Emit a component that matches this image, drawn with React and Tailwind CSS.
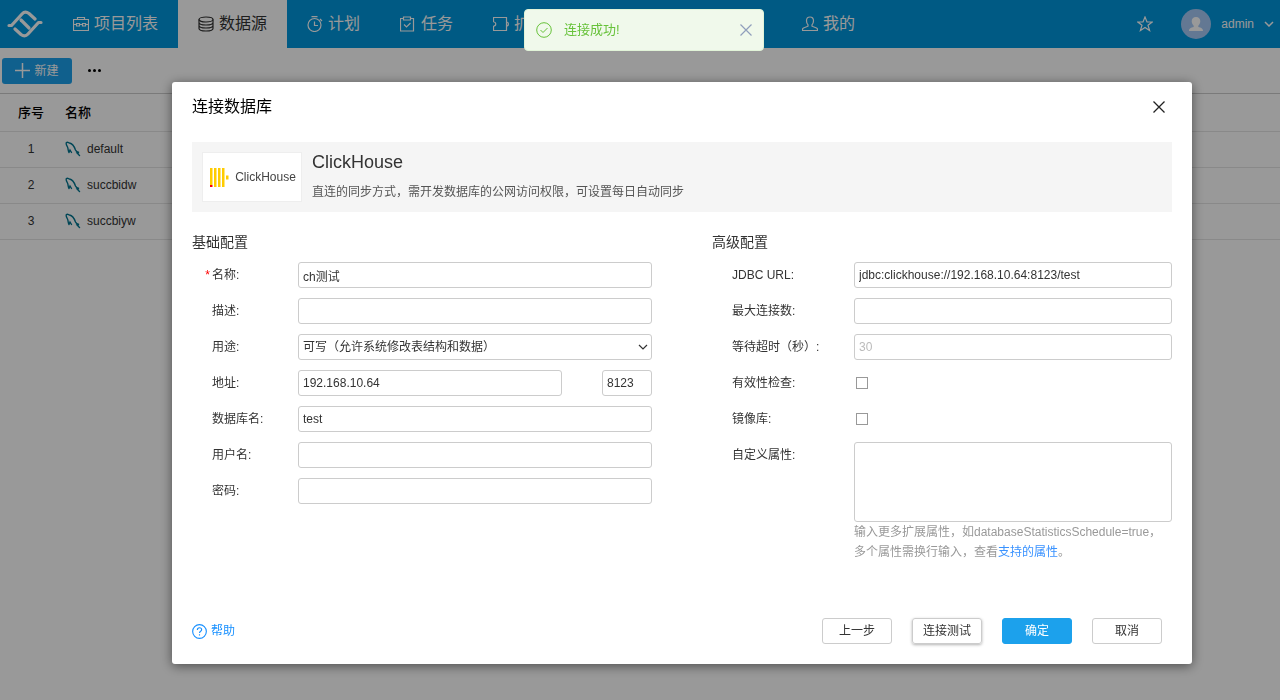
import { useState } from 'react'

const font = "font-['Liberation_Sans','Noto_Sans_CJK_SC',sans-serif]"

function Logo() {
  return (
    <svg viewBox="0 0 36 28" className="h-7 w-9" fill="none" stroke="#fff" strokeWidth="3.2" strokeLinejoin="round" strokeLinecap="round">
      <path d="M2 15.500h2.500L15 4c2-2.200 4.500-2.400 7-.5l6 5.500" />
      <path d="M34 12.500h-2.500L21 24c-2 2.200-4.500 2.400-7 .5L8 19" />
      <path d="M14 10l8 8" />
    </svg>
  )
}

function NavIcon({ children }) {
  return (
    <svg viewBox="0 0 16 16" className="h-4 w-4 shrink-0" fill="none" stroke="currentColor" strokeWidth="1.2">
      {children}
    </svg>
  )
}

const icons = {
  project: (
    <NavIcon>
      <path d="M.5 3.500h15v11H.5zM4.500 3.500v-2h7v2M.5 8.500h3M6.500 8.500h3M12.500 8.500h3" />
      <path d="M3.500 7.500h3v2.500h-3zM9.500 7.500h3v2.500h-3z" />
    </NavIcon>
  ),
  database: (
    <NavIcon>
      <ellipse cx="8" cy="3.500" rx="7" ry="2.500" />
      <path d="M1 3.500v9C1 13.900 4.100 15 8 15s7-1.100 7-2.500v-9M1 6.500C1 7.900 4.100 9 8 9s7-1.100 7-2.500M1 9.500C1 10.900 4.100 12 8 12s7-1.100 7-2.500" />
    </NavIcon>
  ),
  plan: (
    <NavIcon>
      <circle cx="7.500" cy="9" r="6.500" />
      <path d="M4.500 .6h6M7.500 5.500v4H11M13 3l2 2" />
    </NavIcon>
  ),
  task: (
    <NavIcon>
      <path d="M3.500 2.500h-3v12.500h13V2.500h-3M3.500 1h7v3h-7zM4 8.500l2.500 2.500L10.500 7" />
    </NavIcon>
  ),
  extension: (
    <NavIcon>
      <path d="M.5 6V1.500h13V6M13.500 10v4.500H.5V10M.5 6c3 0 3 4 0 4M13.500 6v4c2.500 0 2.500-4 0-4z" />
    </NavIcon>
  ),
  mine: (
    <NavIcon>
      <path d="M8 1C5.800 1 4.500 2.600 4.500 4.800c0 1.700.7 3.200 1.500 4v1.400L1.500 12c-.6.300-1 .8-1 1.500v1h15v-1c0-.7-.4-1.200-1-1.500L10 10.200V8.800c.8-.8 1.500-2.300 1.500-4C11.500 2.600 10.200 1 8 1z" />
    </NavIcon>
  ),
}

const navItems = [
  { key: 'project', label: '项目列表' },
  { key: 'database', label: '数据源', active: true },
  { key: 'plan', label: '计划' },
  { key: 'task', label: '任务' },
  { key: 'extension', label: '扩展', wide: true },
  { key: 'mine', label: '我的' },
]

const sources = ['default', 'succbidw', 'succbiyw']

function Header() {
  return (
    <header className="flex h-12 items-center bg-[#0096dc] text-white">
      <div className="w-[53px] shrink-0 pl-[7px]"><Logo /></div>
      <nav className="flex h-full">
        {navItems.map(({ key, label, active, wide }) => (
          <a
            key={key}
            href="#"
            className={`flex h-full shrink-0 items-center gap-[5px] px-5 text-base whitespace-nowrap ${active ? 'bg-white text-[#333]' : ''} ${wide ? 'w-[309px]' : ''}`}
          >
            {icons[key]}
            <span>{label}</span>
          </a>
        ))}
      </nav>
      <div className="ml-auto flex items-center pr-1.5">
        <button type="button" aria-label="收藏" className="mr-7">
          <svg viewBox="0 0 16 16" className="h-4 w-4" fill="none" stroke="currentColor" strokeWidth="1.2">
            <path d="M8 1l2 5h5.200l-4.200 3.300 1.600 5.200L8 11.400l-4.600 3.100L5 9.300.8 6H6z" />
          </svg>
        </button>
        <button type="button" className="flex items-center text-xs">
          <svg viewBox="0 0 30 30" className="mr-2.5 h-[30px] w-[30px]">
            <circle cx="15" cy="15" r="15" fill="#a5c9f5" />
            <path d="M15 8c-2.800 0-4.300 1.900-4.300 4.300 0 1.800.9 3.500 2 4.400v1.200c-2.600.8-4.700 1-4.700 4.100h14c0-3.100-2.100-3.300-4.700-4.100v-1.200c1.100-.9 2-2.600 2-4.400C19.300 9.900 17.800 8 15 8z" fill="#fff" />
          </svg>
          admin
          <svg viewBox="0 0 10 6" className="ml-2.5 h-1.5 w-2.5" fill="none" stroke="currentColor" strokeWidth="1.5">
            <path d="M1 1l4 4 4-4" />
          </svg>
        </button>
      </div>
    </header>
  )
}

function MysqlIcon() {
  return (
    <svg viewBox="0 0 16 16" className="h-4 w-4" fill="none" stroke="#00758f" strokeWidth="1.4" strokeLinecap="round">
      <path d="M4 11.500C2.800 10 3.500 8 2.500 6 1.500 4 .5 2.500 1.500 1.500c1-.8 2 .3 3 .5 3 .5 5 4 6 7 .5 1.300 1 2 3.500 2.500l-2 .5 2.500 2.500M4 11.500l1-2.500 1.500 2.500" />
    </svg>
  )
}

function SourceList() {
  return (
    <main>
      <div className="flex h-[46px] items-center border-b border-[#ccc] pl-0.5 text-xs">
        <button type="button" className="flex h-[26px] w-[70px] items-center justify-center gap-1 rounded-[3px] bg-[#1ca1ec] text-white">
          <svg viewBox="0 0 15 15" className="h-[15px] w-[15px]" stroke="currentColor" strokeWidth="1.500">
            <path d="M7.500 0v15M0 7.500h15" />
          </svg>
          新建
        </button>
        <button type="button" aria-label="更多" className="ml-4 flex gap-0.5">
          {[0, 1, 2].map(i => <span key={i} className="h-[3px] w-[3px] rounded-full bg-black" />)}
        </button>
      </div>
      <table className="w-full text-xs text-[#333]">
        <thead>
          <tr className="h-[37px] border-b border-[#e5e5e5] text-[13px] text-black">
            <th className="w-[62px] font-medium">序号</th>
            <th className="pl-[3px] text-left font-medium">名称</th>
          </tr>
        </thead>
        <tbody>
          {sources.map((name, i) => (
            <tr key={name} className="h-9 border-b border-[#e5e5e5]">
              <td className="text-center">{i + 1}</td>
              <td className="pl-[3px]">
                <div className="flex items-center gap-1.5"><MysqlIcon />{name}</div>
              </td>
            </tr>
          ))}
        </tbody>
      </table>
    </main>
  )
}

const control = 'h-[26px] min-w-0 rounded-[3px] border border-[#ccc] bg-white px-1 text-xs text-[#333] placeholder:text-[#bbb] outline-none'

function Field({ id, label, required, labelWidth, children }) {
  return (
    <div className="flex min-h-[26px] items-start">
      <label htmlFor={id} className={`shrink-0 leading-[26px] ${labelWidth}`}>
        <span className="inline-block w-5 pr-0.5 text-right text-[#f00]">{required ? '*' : ''}</span>
        {label}:
      </label>
      {children}
    </div>
  )
}

function BasicConfig() {
  const w = 'w-[106px]'
  return (
    <section className="w-[46.94%]">
      <h3 className="mb-2.5 text-sm leading-5">基础配置</h3>
      <div className="flex flex-col gap-2.5">
        <Field id="name" label="名称" required labelWidth={w}><input id="name" className={`${control} flex-1`} defaultValue="ch测试" /></Field>
        <Field id="desc" label="描述" labelWidth={w}><input id="desc" className={`${control} flex-1`} /></Field>
        <Field id="usage" label="用途" labelWidth={w}>
          <div className="relative flex flex-1">
            <select id="usage" className={`${control} flex-1 appearance-none`}>
              <option>可写（允许系统修改表结构和数据）</option>
            </select>
            <svg viewBox="0 0 10 6" className="pointer-events-none absolute top-2.5 right-1 h-1.5 w-2.5" fill="none" stroke="#333" strokeWidth="1.2">
              <path d="M1 1l4 4 4-4" />
            </svg>
          </div>
        </Field>
        <Field id="host" label="地址" labelWidth={w}>
          <input id="host" className={`${control} flex-1`} defaultValue="192.168.10.64" />
          <input aria-label="端口" className={`${control} ml-10 w-[50px]`} defaultValue="8123" />
        </Field>
        <Field id="db" label="数据库名" labelWidth={w}><input id="db" className={`${control} flex-1`} defaultValue="test" /></Field>
        <Field id="user" label="用户名" labelWidth={w}><input id="user" className={`${control} flex-1`} /></Field>
        <Field id="password" label="密码" labelWidth={w}><input id="password" type="password" className={`${control} flex-1`} /></Field>
      </div>
    </section>
  )
}

function AdvancedConfig() {
  const w = 'w-[142px]'
  const checkbox = 'mt-[7px] ml-0.5 h-3 w-3 appearance-none border border-[#999] bg-white'
  return (
    <section className="w-[46.94%]">
      <h3 className="mb-2.5 text-sm leading-5">高级配置</h3>
      <div className="flex flex-col gap-2.5">
        <Field id="url" label="JDBC URL" labelWidth={w}>
          <input id="url" className={`${control} flex-1`} defaultValue="jdbc:clickhouse://192.168.10.64:8123/test" />
        </Field>
        <Field id="max" label="最大连接数" labelWidth={w}><input id="max" className={`${control} flex-1`} /></Field>
        <Field id="timeout" label="等待超时（秒）" labelWidth={w}><input id="timeout" className={`${control} flex-1`} placeholder="30" /></Field>
        <Field id="valid" label="有效性检查" labelWidth={w}><input id="valid" type="checkbox" className={checkbox} /></Field>
        <Field id="mirror" label="镜像库" labelWidth={w}><input id="mirror" type="checkbox" className={checkbox} /></Field>
        <Field id="props" label="自定义属性" labelWidth={w}>
          <div className="flex min-w-0 flex-1 flex-col">
            <textarea id="props" className="h-20 resize-none rounded-[3px] border border-[#ccc] p-1 outline-none" />
            <div className="leading-5 text-[#999]">
              <p>输入更多扩展属性，如databaseStatisticsSchedule=true，</p>
              <p className="flex flex-wrap">
                <span>多个属性需换行输入，查看</span>
                <a href="#" className="text-[#3992ff]">支持的属性</a>
                <span>。</span>
              </p>
            </div>
          </div>
        </Field>
      </div>
    </section>
  )
}

function ClickHouseLogo() {
  return (
    <div className="flex h-[50px] w-[100px] shrink-0 items-center justify-center gap-1.5 border border-[#eee] bg-white pl-0.5 text-xs text-[#444]">
      <svg viewBox="0 0 19 19" className="h-[19px] w-[19px] shrink-0" fill="#fc0">
        <path d="M0 0h2.500v17H0zM4 0h2.500v19H4zM8 0h2.500v19H8zM12 0h2.500v19H12zM16 7.500h2.500v4H16z" />
        <path d="M0 17h2.500v2H0z" fill="#f00" />
      </svg>
      ClickHouse
    </div>
  )
}

function ConnectDialog({ onClose }) {
  const button = 'h-[26px] w-[70px] rounded-[3px] border text-xs'
  return (
    <div className="fixed inset-0 bg-black/40 pt-[82px] pr-[88px] pl-[172px]">
      <div role="dialog" aria-label="连接数据库" className="rounded-[3px] bg-white px-5 pb-5 text-xs text-[#333] shadow-[0_2px_12px_rgba(0,0,0,0.5)]">
        <div className="flex h-[60px] items-start justify-between pt-[13px] pr-1.5">
          <h2 className="text-base leading-6 text-black">连接数据库</h2>
          <button type="button" aria-label="关闭" onClick={onClose} className="pt-[5px]">
            <svg viewBox="0 0 14 14" className="h-3.5 w-3.5" stroke="#222" strokeWidth="1.300">
              <path d="M1.500 1.500l11 11M12.500 1.500l-11 11" />
            </svg>
          </button>
        </div>
        <div className="flex h-[70px] items-start gap-2.5 bg-[#f5f5f5] p-2.5">
          <ClickHouseLogo />
          <div>
            <p className="text-lg leading-5">ClickHouse</p>
            <p className="mt-2.5 leading-5 text-[#555]">直连的同步方式，需开发数据库的公网访问权限，可设置每日自动同步</p>
          </div>
        </div>
        <div className="flex justify-between pt-5">
          <BasicConfig />
          <AdvancedConfig />
        </div>
        <div className="mt-14 flex items-center">
          <a href="#" className="flex items-center gap-1 text-[#1890ff]">
            <svg viewBox="0 0 16 16" className="h-[15px] w-[15px]" fill="none" stroke="currentColor" strokeWidth="1.200">
              <circle cx="8" cy="8" r="7.300" />
              <path d="M5.700 6.300C5.700 4.900 6.600 4 8 4s2.300.9 2.300 2.100C10.300 7.700 8 7.900 8 9.700M8 11v1.300" />
            </svg>
            帮助
          </a>
          <div className="ml-auto flex gap-5 pr-2.5">
            <button type="button" className={`${button} border-[#ccc]`}>上一步</button>
            <button type="button" className={`${button} border-[#ccc] shadow-[0_1px_3px_rgba(0,0,0,0.3)]`}>连接测试</button>
            <button type="button" className={`${button} border-[#1ca1ec] bg-[#1ca1ec] text-white`}>确定</button>
            <button type="button" onClick={onClose} className={`${button} border-[#ccc]`}>取消</button>
          </div>
        </div>
      </div>
    </div>
  )
}

function Toast({ onClose }) {
  return (
    <div role="status" className="fixed top-[9px] left-[524px] flex h-[42px] w-60 items-center rounded border border-[#e1f3d8] bg-[#f0f9eb] px-[11px] text-[13px] text-[#67c23a]">
      <svg viewBox="0 0 16 16" className="mr-3 h-4 w-4" fill="none" stroke="currentColor">
        <circle cx="8" cy="8" r="7.300" />
        <path d="M4.500 8l2.500 2.500L11.500 6" />
      </svg>
      连接成功!
      <button type="button" aria-label="关闭提示" onClick={onClose} className="ml-auto">
        <svg viewBox="0 0 12 12" className="h-3 w-3" stroke="#909fbc" strokeWidth="1.200">
          <path d="M.5.5l11 11M11.500.5l-11 11" />
        </svg>
      </button>
    </div>
  )
}

export default function App() {
  const [dialogOpen, setDialogOpen] = useState(true)
  const [toastOpen, setToastOpen] = useState(true)

  return (
    <div className={`min-h-screen bg-white ${font}`}>
      <Header />
      <SourceList />
      {dialogOpen && <ConnectDialog onClose={() => setDialogOpen(false)} />}
      {toastOpen && <Toast onClose={() => setToastOpen(false)} />}
    </div>
  )
}
